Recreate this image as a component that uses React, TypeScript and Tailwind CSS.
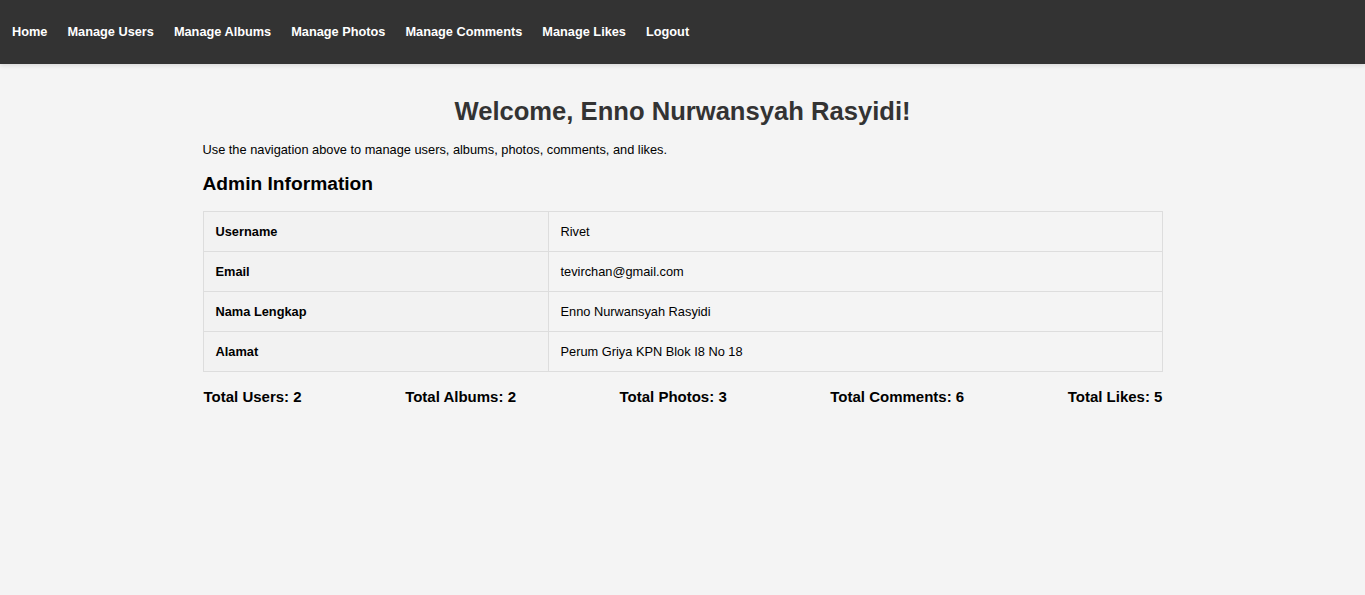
const navLinks = [
  "Home",
  "Manage Users",
  "Manage Albums",
  "Manage Photos",
  "Manage Comments",
  "Manage Likes",
  "Logout",
];

const adminInfo = [
  { label: "Username", value: "Rivet" },
  { label: "Email", value: "tevirchan@gmail.com" },
  { label: "Nama Lengkap", value: "Enno Nurwansyah Rasyidi" },
  { label: "Alamat", value: "Perum Griya KPN Blok I8 No 18" },
];

const stats = [
  { label: "Total Users", count: 2 },
  { label: "Total Albums", count: 2 },
  { label: "Total Photos", count: 3 },
  { label: "Total Comments", count: 6 },
  { label: "Total Likes", count: 5 },
];

export default function App() {
  return (
    <div className="min-h-screen bg-[#f4f4f4] font-['Liberation_Sans',Arial,sans-serif] text-black">
      <header className="h-16 bg-[#333333] shadow-[0_2px_4px_rgba(0,0,0,0.1)]">
        <nav className="flex h-full items-center gap-5 px-3">
          {navLinks.map((link) => (
            <a key={link} href="#" className="text-[12.75px] font-bold text-white">
              {link}
            </a>
          ))}
        </nav>
      </header>

      <main className="mx-auto max-w-[960px] pt-8">
        <h1 className="text-center text-[25.6px] leading-[30px] font-bold text-[#333333]">
          Welcome, Enno Nurwansyah Rasyidi!
        </h1>
        <p className="mt-[16px] text-[12.8px] leading-[16px]">
          Use the navigation above to manage users, albums, photos, comments, and likes.
        </p>
        <h2 className="mt-[14px] text-[19.2px] leading-[24px] font-bold">Admin Information</h2>

        <table className="mt-[15px] w-full border-collapse text-[12.8px]">
          <tbody>
            {adminInfo.map((row) => (
              <tr key={row.label}>
                <th className="w-[345px] border border-[#dddddd] bg-[#f2f2f2] px-3 py-3 text-left leading-[15px] font-bold">
                  {row.label}
                </th>
                <td className="border border-[#dddddd] bg-[#f4f4f4] px-3 py-3 leading-[15px]">
                  {row.value}
                </td>
              </tr>
            ))}
          </tbody>
        </table>

        <div className="mt-[16px] flex justify-between pl-px text-[15px] leading-[18px] font-bold">
          {stats.map((s) => (
            <span key={s.label}>
              {s.label}: {s.count}
            </span>
          ))}
        </div>
      </main>
    </div>
  );
}
